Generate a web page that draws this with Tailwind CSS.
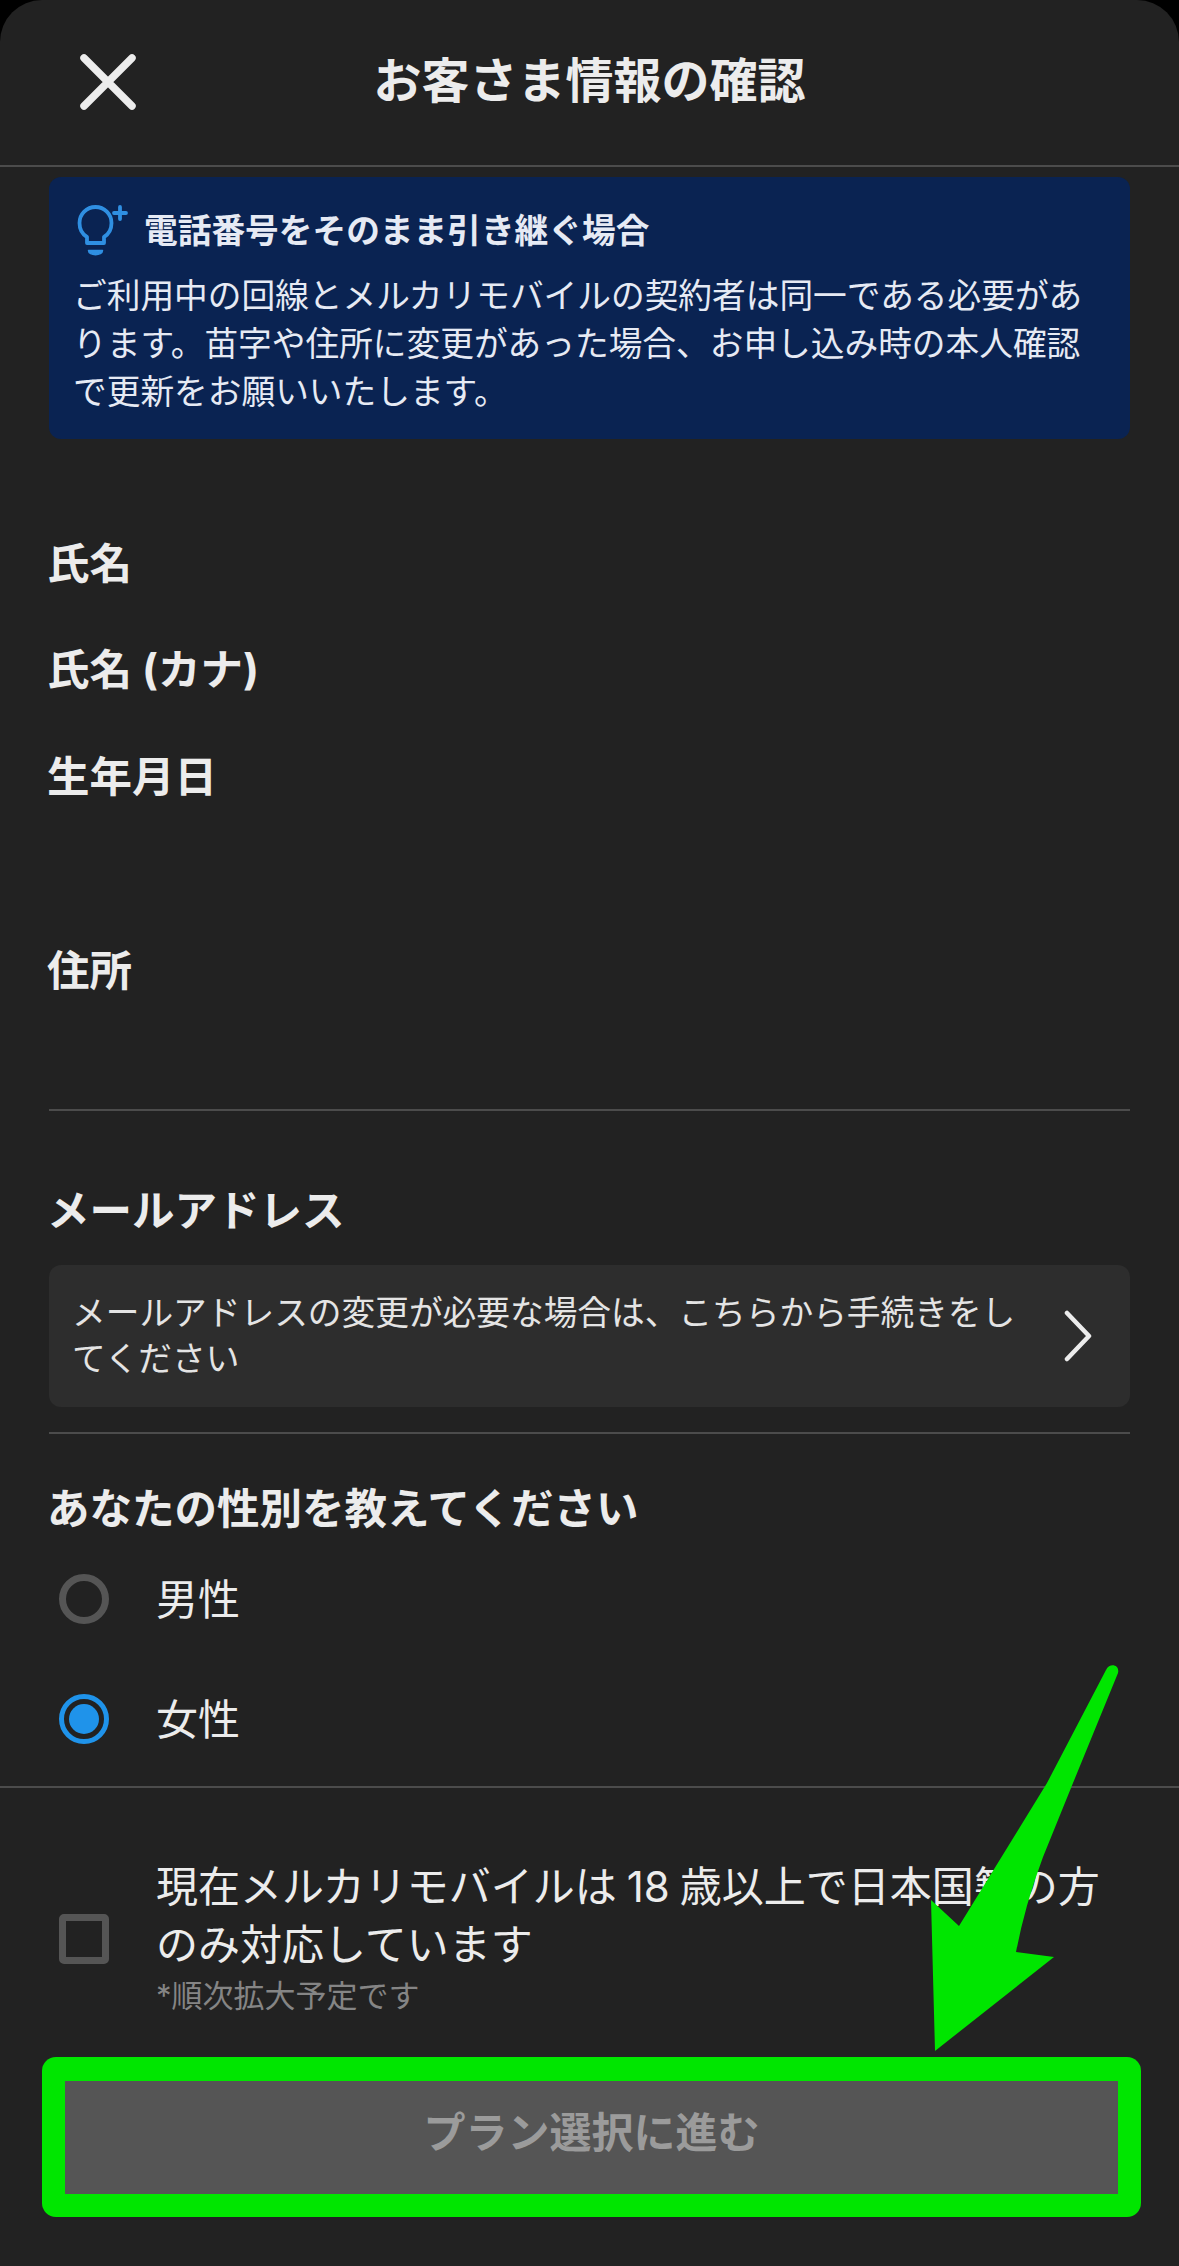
<!DOCTYPE html>
<html lang="ja">
<head>
  <meta charset="UTF-8" />
  <title>お客さま情報の確認</title>
  <script src="https://cdn.jsdelivr.net/npm/@tailwindcss/browser@4"></script>
</head>
<body class="bg-black font-['Inter','Noto_Sans_CJK_JP',sans-serif] text-[#ececec]">
  <div class="relative w-[1179px] h-[2266px] bg-[#222222] rounded-t-[42px] overflow-hidden">

    <!-- Header -->
    <header class="relative h-[167px] border-b-2 border-[#4c4c4c] flex items-center justify-center pb-[4px]">
      <svg class="absolute left-[78px] top-[52px] w-[60px] h-[60px]" viewBox="0 0 60 60" fill="none" stroke="#ececec" stroke-width="7.5" stroke-linecap="round">
        <path d="M6 6 L54 54 M54 6 L6 54" />
      </svg>
      <h1 class="text-[48px] font-bold leading-[60px]">お客さま情報の確認</h1>
    </header>

    <main class="px-[49px]">
      <!-- Info -->
      <section class="mt-[10px] bg-[#0a2352] rounded-[12px] pl-[24px] pr-[24px] pt-[30px] pb-[23px] text-[#e6eaf4]">
        <div class="flex items-center h-[48px]">
          <svg class="w-[64px] h-[64px] shrink-0 mr-[7px]" viewBox="0 0 64 64" fill="none" stroke="#2f8fe2" stroke-width="3.8" stroke-linecap="round" stroke-linejoin="round">
            <path d="M14 44 V38 C9 35 6.5 30 6.5 24 A16 16 0 0 1 38.5 24 C38.5 30 36 35 31 38 V44 Z" />
            <path d="M41 14 H53 M47 8 V20" />
            <path d="M15.5 51.5 H29.5 C29.5 57 15.5 57 15.5 51.5 Z" fill="#2f8fe2" stroke-width="1.5" />
          </svg>
          <h2 class="text-[33.7px] font-bold leading-[48px]">電話番号をそのまま引き継ぐ場合</h2>
        </div>
        <p class="mt-[17px] text-[33.7px] leading-[48px]">ご利用中の回線とメルカリモバイルの契約者は同一である必要があります。苗字や住所に変更があった場合、お申し込み時の本人確認で更新をお願いいたします。</p>
      </section>

      <!-- Customer fields -->
      <h3 class="mt-[95px] -ml-[2px] text-[42.5px] font-bold leading-[60px]">氏名</h3>
      <h3 class="mt-[46px] -ml-[2px] text-[42.5px] font-bold leading-[60px]">氏名 (カナ)</h3>
      <h3 class="mt-[47px] -ml-[2px] text-[42.5px] font-bold leading-[60px]">生年月日</h3>
      <h3 class="mt-[134px] -ml-[2px] text-[42.5px] font-bold leading-[60px]">住所</h3>
      <div class="mt-[108px] border-t-2 border-[#4c4c4c]"></div>

      <!-- Mail -->
      <h3 class="mt-[70px] -ml-[2px] text-[42.5px] font-bold leading-[60px]">メールアドレス</h3>
      <a class="mt-[24px] h-[142px] bg-[#2d2d2d] rounded-[12px] flex items-center pl-[23px] pr-[38px]">
        <p class="flex-1 pr-[30px] text-[33.7px] leading-[46px] text-[#e4e4e4]">メールアドレスの変更が必要な場合は、こちらから手続きをしてください</p>
        <svg class="w-[28px] h-[52px] shrink-0" viewBox="0 0 28 52" fill="none" stroke="#ececec" stroke-width="4.5" stroke-linecap="round" stroke-linejoin="round">
          <path d="M3 3 L25 26 L3 49" />
        </svg>
      </a>
      <div class="mt-[25px] border-t-2 border-[#4c4c4c]"></div>

      <!-- Gender -->
      <h3 class="mt-[45px] -ml-[2px] text-[42.5px] font-bold leading-[60px]">あなたの性別を教えてください</h3>
      <label class="mt-[30px] h-[60px] flex items-center pl-[10px] gap-[47px] text-[42px]">
        <span class="w-[50px] h-[50px] rounded-full border-[7px] border-[#555555]"></span>
        <span>男性</span>
      </label>
      <label class="mt-[60px] h-[60px] flex items-center pl-[10px] gap-[47px] text-[42px]">
        <span class="w-[50px] h-[50px] rounded-full border-[5px] border-[#1f93ea] flex items-center justify-center">
          <span class="w-[30px] h-[30px] rounded-full bg-[#1f93ea]"></span>
        </span>
        <span>女性</span>
      </label>
      <div class="mt-[37px] -mx-[49px] border-t-2 border-[#4c4c4c]"></div>

      <!-- Agreement -->
      <label class="mt-[70px] flex items-center pl-[10px] gap-[47px]">
        <span class="w-[50px] h-[50px] shrink-0 rounded-[5px] border-[7px] border-[#555555] mt-[2px]"></span>
        <span class="block w-[965px]">
          <span class="block text-[42px] leading-[58px]">現在メルカリモバイルは<span class="mx-[10px]">18</span>歳以上で日本国籍の方のみ対応しています</span>
          <span class="block text-[31px] leading-[44px] text-[#858585]">*順次拡大予定です</span>
        </span>
      </label>

      <!-- Submit, framed -->
      <div class="mt-[39px] -ml-[7px] -mr-[11px] h-[160px] bg-[#00e600] rounded-[14px] px-[23px] pt-[24px] pb-[23px]">
        <button class="w-full h-full bg-[#555555] text-[#9b9b9b] text-[42px] font-bold pb-[10px]">プラン選択に進む</button>
      </div>
    </main>

    <!-- Green arrow annotation -->
    <svg class="absolute inset-0 w-[1179px] h-[2266px] pointer-events-none" viewBox="0 0 1179 2266">
      <path d="M1106 1670 C1110 1662 1120 1665 1118 1673 L1073 1783 L1043 1857 Q1025 1905 1016 1952 L1054 1957 L935 2051 L931 1900 L959 1926 L1047 1783 Z" fill="#00e600" />
    </svg>
  </div>
</body>
</html>
